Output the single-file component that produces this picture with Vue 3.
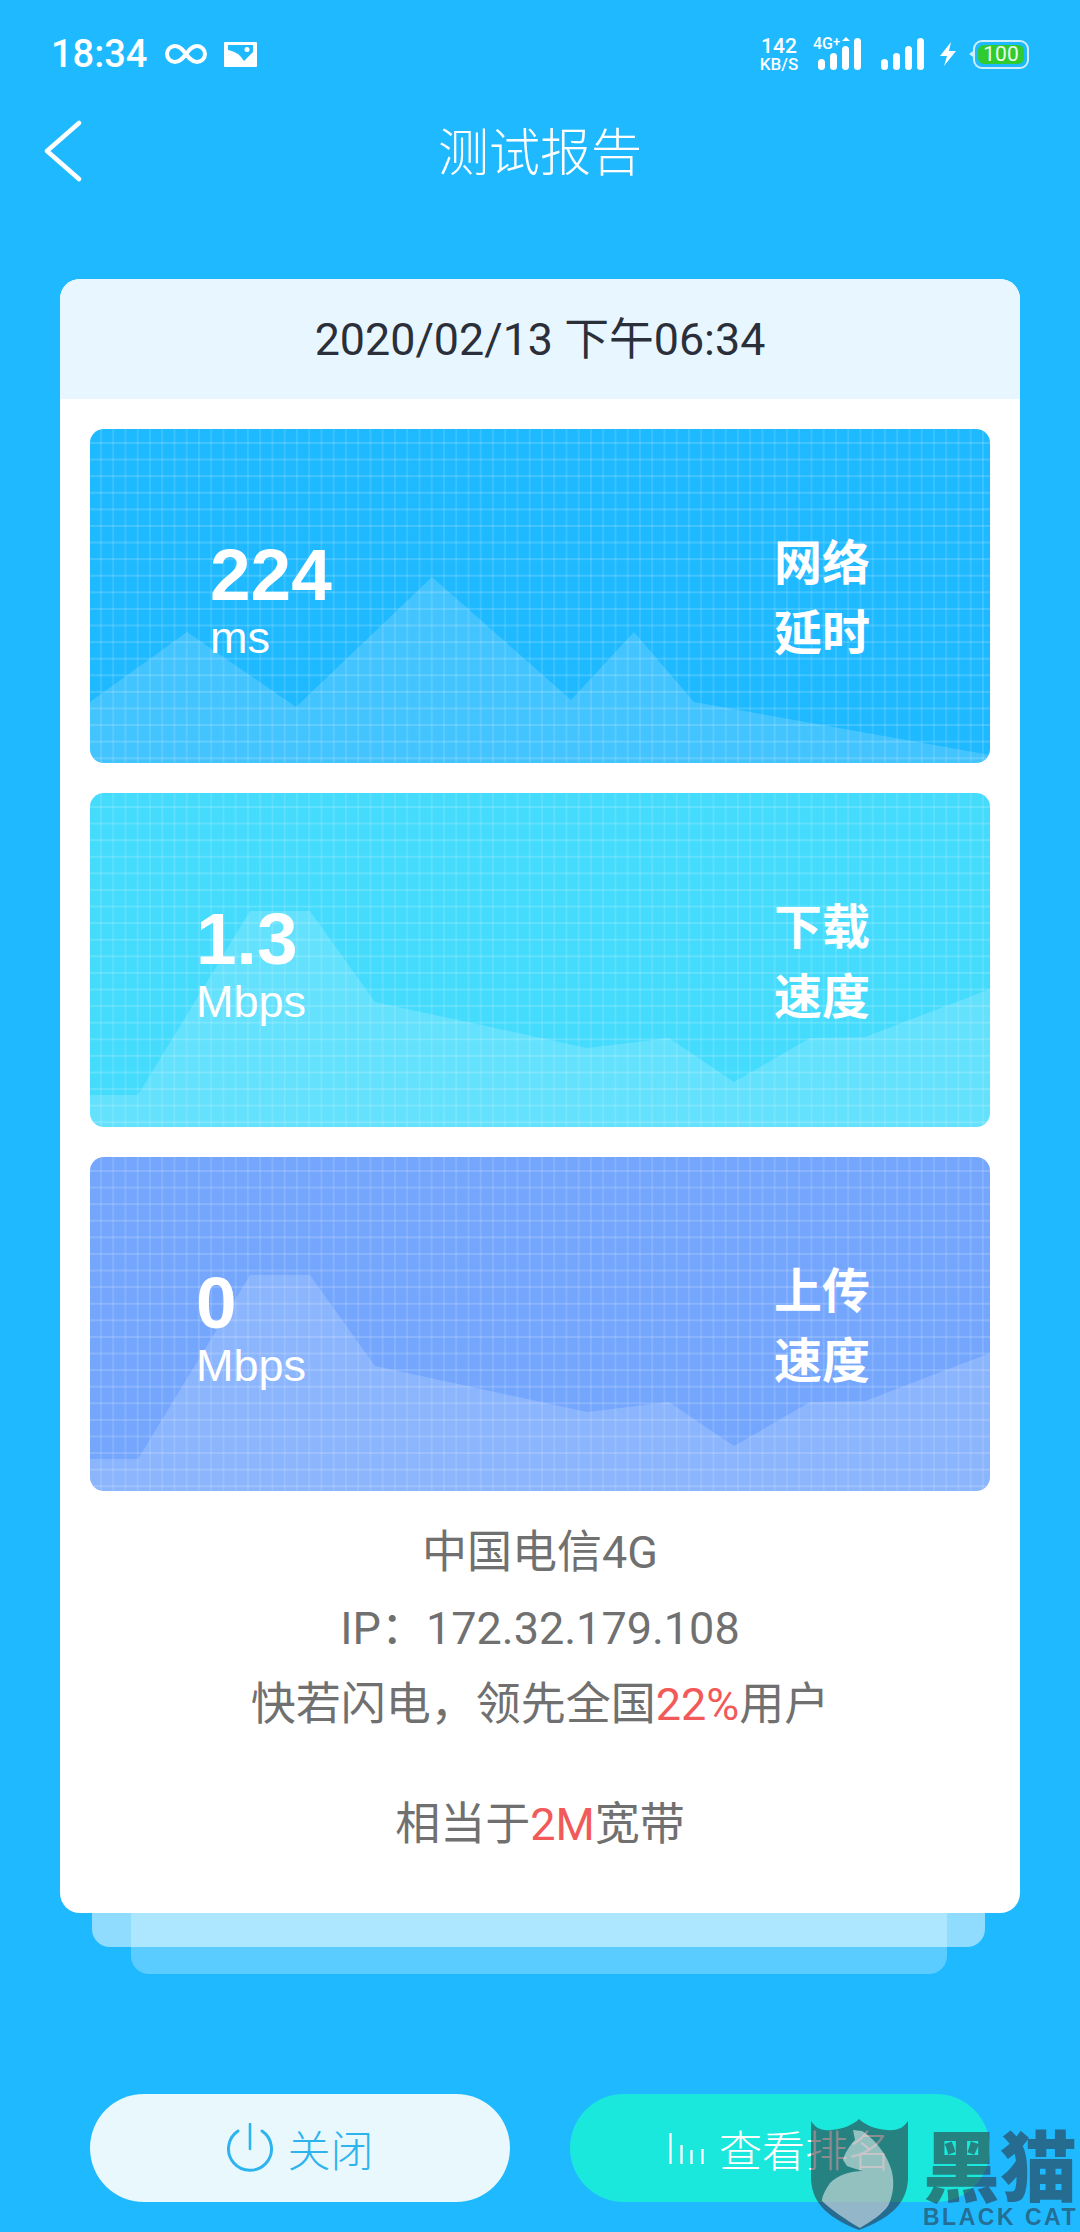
<template>
  <div class="page">
    <div class="status">
      <div class="status-left">
        <span class="time">18:34</span>
        <svg class="ic-loop" viewBox="0 0 44 20" fill="none" stroke="#fff" stroke-width="4">
          <path d="M22 10c-3-4-6-8-11-8a8 8 0 0 0 0 16c5 0 8-4 11-8s6-8 11-8a8 8 0 0 1 0 16c-5 0-8-4-11-8z" />
        </svg>
        <svg class="ic-image" viewBox="0 0 33 25">
          <rect width="33" height="25" rx="1" fill="#fff" />
          <path fill="#1eb9ff" d="M4 3h25v7l-9 9-3-4c-3-4-8-6-13-7z" />
          <circle cx="23" cy="7.5" r="2.5" fill="#fff" />
        </svg>
      </div>
      <div class="status-right">
        <div class="speed"><span class="speed-num">142</span><span class="speed-unit">KB/S</span></div>
        <div class="signal">
          <span class="net">4G<sup>+</sup></span>
          <i class="net-arrow"></i>
          <div class="bars">
            <i class="b1"></i><i class="b2"></i><i class="b3 cut"></i><i class="b4"></i>
          </div>
        </div>
        <div class="bars second">
          <i class="b1"></i><i class="b2"></i><i class="b3b"></i><i class="b4"></i>
        </div>
        <svg class="ic-bolt" viewBox="0 0 18 24"><path fill="#fff" d="M12 0 1 14h7l-3 10 12-15h-7z" /></svg>
        <div class="battery"><span>100</span></div>
      </div>
    </div>

    <div class="nav">
      <svg class="back" viewBox="0 0 40 64" fill="none" stroke="#fff" stroke-width="4.5" stroke-linecap="round" stroke-linejoin="round">
        <path d="M35 4 3 32l32 28" />
      </svg>
      <span class="nav-title">测试报告</span>
    </div>

    <div class="stack">
      <div class="layer layer-far"></div>
      <div class="layer layer-near"></div>
      <div class="card">
        <div class="card-head">2020/02/13 下午06:34</div>
        <div class="panels">
          <div v-for="item in panels" :key="item.label[0]" class="panel" :class="item.tone">
            <svg class="chart" viewBox="0 0 900 334" preserveAspectRatio="none">
              <polygon :points="item.points" fill="#fff" fill-opacity="0.17" />
            </svg>
            <div class="grid"></div>
            <div class="panel-body">
              <div class="reading">
                <div class="value">{{ item.value }}</div>
                <div class="unit">{{ item.unit }}</div>
              </div>
              <div class="label">
                <div>{{ item.label[0] }}</div>
                <div>{{ item.label[1] }}</div>
              </div>
            </div>
          </div>
        </div>
        <div class="info">
          <div>中国电信4G</div>
          <div>IP：172.32.179.108</div>
          <div>快若闪电，领先全国<em>22%</em>用户</div>
          <div class="info-gap">相当于<em>2M</em>宽带</div>
        </div>
      </div>
    </div>

    <div class="actions">
      <button class="btn btn-close">
        <svg class="ic-power" viewBox="0 0 46 50" fill="none" stroke="#2db4ef" stroke-width="3" stroke-linecap="round">
          <path d="M11 8A21.5 21.5 0 1 0 35 8" />
          <path d="M23 1v25" stroke-width="2.6" />
        </svg>
        <span>关闭</span>
      </button>
      <button class="btn btn-rank">
        <svg class="ic-rank" viewBox="0 0 35 31" stroke="#fff" stroke-width="2.3">
          <path d="M1.5 0v31M12.5 12v19M22.5 17v14M33.5 16v15" />
        </svg>
        <span>查看排名</span>
      </button>
    </div>

    <div class="watermark">
      <svg class="wm-shield" viewBox="0 0 97 111">
        <path fill="rgba(45,45,55,.55)" d="M0 2c5 8 12 10 20 9 12-1 22-5 28-11 6 6 16 10 28 11 8 1 16-1 21-9v58c-1 26-20 40-49 51C20 100 1 86 0 60z" />
        <path fill="rgba(255,255,255,.5)" d="M42 11l9 1c5 3 13 10 18 17 7 9 12 20 13 30 1 10-1 20-5 28-6 8-16 15-28 22-14-8-28-18-38-27 0-4 2-9 8-18 8-8 20-12 33-12-6-2-12-3-16-5l-4-6c1-5 4-10 7-14 2-3 4-5 5-6z" />
      </svg>
      <div class="wm-text">
        <div class="wm-cn">黑猫</div>
        <div class="wm-en">BLACK CAT</div>
      </div>
    </div>
  </div>
</template>

<script setup>
const mountainPoints = '0,334 0,273 97,203 206,278 342,148 481,271 544,203 604,273 900,326 900,334'
const ridgePoints = '0,334 0,302 48,302 160,118 220,118 285,209 497,255 579,245 644,289 720,245 775,244 900,196 900,334'

const panels = [
  { tone: 'latency', value: '224', unit: 'ms', label: ['网络', '延时'], points: mountainPoints },
  { tone: 'down', value: '1.3', unit: 'Mbps', label: ['下载', '速度'], points: ridgePoints },
  { tone: 'up', value: '0', unit: 'Mbps', label: ['上传', '速度'], points: ridgePoints }
]
</script>

<style>
body {
  background: #1eb9ff;
}
</style>

<style scoped>
.page {
  position: relative;
  width: 1080px;
  height: 2232px;
  overflow: hidden;
  background: #1eb9ff;
  font-family: Roboto, "Noto Sans CJK SC", sans-serif;
}

.status {
  height: 108px;
  display: flex;
  align-items: center;
  justify-content: space-between;
  padding: 0 51px;
  color: #fff;
  box-sizing: border-box;
}

.status-left {
  display: flex;
  align-items: center;
}

.time {
  font-size: 38px;
  font-weight: 500;
}

.ic-loop {
  width: 44px;
  height: 20px;
  margin-left: 17px;
}

.ic-image {
  width: 33px;
  height: 25px;
  margin-left: 16px;
}

.status-right {
  display: flex;
  align-items: center;
}

.speed {
  display: flex;
  flex-direction: column;
  align-items: center;
  width: 42px;
  font-weight: 500;
}

.speed-num {
  font-size: 21px;
  line-height: 20px;
}

.speed-unit {
  font-size: 17px;
  line-height: 16px;
}

.signal {
  position: relative;
  margin-left: 18px;
}

.net {
  position: absolute;
  left: -5px;
  top: -2px;
  font-size: 16px;
  font-weight: 500;
  line-height: 16px;
}

.net sup {
  font-size: 13px;
  line-height: 0;
  vertical-align: 3px;
}

.net-arrow {
  position: absolute;
  left: 24px;
  top: -1px;
  border-left: 4px solid transparent;
  border-right: 4px solid transparent;
  border-bottom: 4px solid #fff;
}

.bars {
  display: flex;
  align-items: flex-end;
  gap: 5px;
  height: 32px;
}

.bars.second {
  margin-left: 20px;
}

.bars i {
  display: block;
  width: 7px;
  border-radius: 4px;
  background: #fff;
}

.bars .b1 { height: 11px; }
.bars .b2 { height: 17px; }
.bars .b3 { height: 24px; }
.bars .b3b { height: 24px; }
.bars .b4 { height: 32px; }

.ic-bolt {
  width: 18px;
  height: 24px;
  margin-left: 15px;
}

.battery {
  position: relative;
  width: 56px;
  height: 29px;
  margin-left: 16px;
  box-sizing: border-box;
  padding: 3px;
  border: 2px solid #cdeeff;
  border-radius: 9px;
}

.battery::before {
  content: "";
  position: absolute;
  left: -6px;
  top: 9px;
  border-top: 3px solid transparent;
  border-bottom: 3px solid transparent;
  border-right: 4px solid #cdeeff;
}

.battery span {
  display: block;
  height: 19px;
  border-radius: 6px;
  background: #2fcb2f;
  font-size: 21px;
  line-height: 19px;
  text-align: center;
  color: #e8fff0;
}

.nav {
  position: relative;
  height: 86px;
  display: flex;
  align-items: center;
  justify-content: center;
}

.back {
  position: absolute;
  left: 44px;
  top: 11px;
  width: 40px;
  height: 64px;
}

.nav-title {
  margin-top: -4px;
  font-size: 51px;
  font-weight: 300;
  color: #fff;
}

.stack {
  position: relative;
  margin: 85px 60px 0;
}

.layer {
  position: absolute;
}

.layer-far {
  left: 71px;
  right: 73px;
  bottom: -61px;
  height: 200px;
  border-radius: 0 0 18px 18px;
  background: rgba(255, 255, 255, 0.275);
}

.layer-near {
  left: 32px;
  right: 35px;
  bottom: -34px;
  height: 200px;
  border-radius: 0 0 18px 18px;
  background: rgba(255, 255, 255, 0.5);
}

.card {
  position: relative;
  height: 1634px;
  background: #fff;
  border-radius: 20px;
  overflow: hidden;
}

.card-head {
  height: 120px;
  background: #e8f7ff;
  font-size: 44.8px;
  line-height: 122px;
  text-align: center;
  color: #2b2f3a;
}

.panels {
  display: flex;
  flex-direction: column;
  gap: 30px;
  padding: 30px 30px 0;
}

.panel {
  position: relative;
  height: 334px;
  border-radius: 14px;
  overflow: hidden;
}

.panel.latency { background: #1fb9ff; }
.panel.down { background: #44dbfd; }
.panel.up { background: #74a6fd; }

.chart,
.grid {
  position: absolute;
  left: 0;
  top: 0;
  width: 100%;
  height: 100%;
}

.grid {
  background-image:
    linear-gradient(90deg, rgba(255, 255, 255, 0.12) 1.5px, transparent 1.5px),
    linear-gradient(rgba(255, 255, 255, 0.16) 2px, transparent 2px);
  background-size: 12.25px 100%, 100% 16.6px;
  background-position: 10px 0, 0 13px;
}

.panel-body {
  position: relative;
  height: 100%;
  display: flex;
  align-items: center;
  justify-content: space-between;
  padding: 0 120px 0 106px;
  font-family: "Liberation Sans", "Noto Sans CJK SC", sans-serif;
  color: #fff;
}

.latency .panel-body {
  padding-left: 120px;
}

.reading {
  margin-top: 8px;
}

.value {
  font-size: 73px;
  font-weight: 700;
  line-height: 70px;
  margin-bottom: 6px;
}

.unit {
  font-size: 45px;
  line-height: 44px;
}

.label {
  margin-top: -4px;
  font-family: "Noto Sans CJK SC", sans-serif;
  font-size: 48px;
  font-weight: 700;
  line-height: 70px;
}

.info {
  margin-top: 24px;
  font-size: 45px;
  line-height: 76px;
  text-align: center;
  color: #707070;
}

.info em {
  font-style: normal;
  color: #f25a5a;
}

.info-gap {
  margin-top: 44px;
}

.actions {
  display: grid;
  grid-template-columns: 420px 420px;
  gap: 60px;
  margin: 181px 90px 0;
}

.btn {
  height: 108px;
  display: flex;
  align-items: center;
  justify-content: center;
  border: none;
  border-radius: 54px;
  padding: 0;
  font-family: "Noto Sans CJK SC", sans-serif;
  font-size: 43px;
  font-weight: 300;
}

.btn-close {
  background: #e8f8fc;
  color: #2db4ef;
  gap: 15px;
}

.btn-rank {
  background: #1be8dc;
  color: #fff;
  gap: 15px;
}

.ic-power {
  width: 46px;
  height: 50px;
}

.ic-rank {
  width: 35px;
  height: 31px;
}

.watermark {
  position: absolute;
  left: 811px;
  top: 2119px;
  display: flex;
  gap: 15px;
}

.wm-shield {
  width: 97px;
  height: 111px;
}

.wm-text {
  color: rgba(45, 45, 55, 0.55);
  font-family: "Noto Sans CJK SC", sans-serif;
  font-weight: 900;
}

.wm-cn {
  margin-top: 2px;
  font-size: 77px;
  line-height: 84px;
  white-space: nowrap;
}

.wm-en {
  font-family: "Liberation Sans", sans-serif;
  font-size: 23px;
  font-weight: 700;
  line-height: 24px;
  white-space: nowrap;
  letter-spacing: 2.5px;
}
</style>
